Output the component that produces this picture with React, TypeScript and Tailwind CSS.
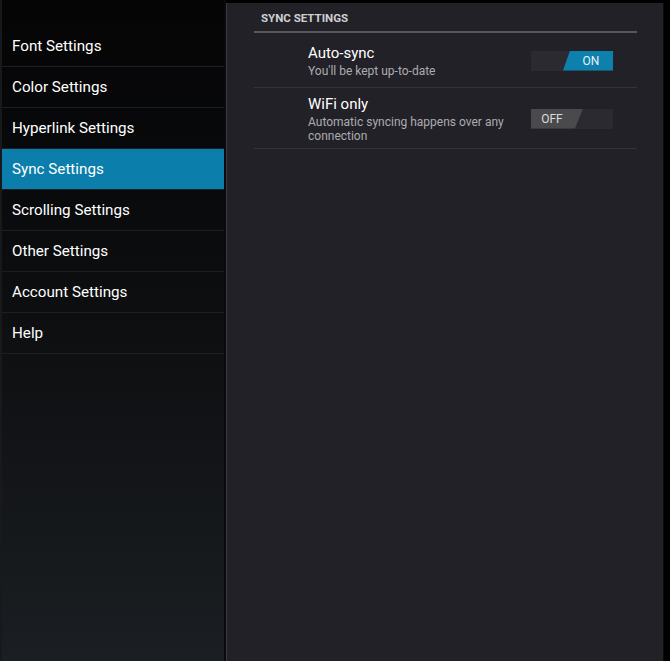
import React from 'react'

const menu = [
  'Font Settings',
  'Color Settings',
  'Hyperlink Settings',
  'Sync Settings',
  'Scrolling Settings',
  'Other Settings',
  'Account Settings',
  'Help',
]

function Toggle({ on }: { on: boolean }) {
  if (on) {
    return (
      <div className="relative w-[82px] h-[20px] bg-[#2b2a30]">
        <div className="absolute inset-0 bg-[#0d80ad] [clip-path:polygon(39px_0,100%_0,100%_100%,32px_100%)]" />
        <span className="absolute inset-y-0 right-0 w-[44px] flex items-center justify-center text-[12px] text-[#e8f4f8]">
          ON
        </span>
      </div>
    )
  }
  return (
    <div className="relative w-[82px] h-[20px] bg-[#2b2a30]">
      <div className="absolute inset-0 bg-[#4a4a4d] [clip-path:polygon(0_0,52px_0,44px_100%,0_100%)]" />
      <span className="absolute inset-y-0 left-0 w-[42px] flex items-center justify-center text-[12px] text-[#dcdcdc]">
        OFF
      </span>
    </div>
  )
}

export default function App() {
  const prefs = [
    { id: 1, title: 'Auto-sync', desc: "You'll be kept up-to-date", on: true },
    { id: 2, title: 'WiFi only', desc: 'Automatic syncing happens over any connection', on: false },
  ]

  return (
    <div className="flex w-[670px] h-[661px] bg-black font-['Roboto',_'Liberation_Sans',_sans-serif] overflow-hidden">
      {/* left menu */}
      <div className="w-[224px] shrink-0 h-full border-l-2 border-[#18191b] bg-gradient-to-b from-[#050506] via-[#0d0f11] to-[#1b1e22] pt-[26px]">
        {menu.map((item) => (
          <div
            key={item}
            className={`h-[41px] flex items-center pl-[10px] pt-[1px] border-b border-[#1c1e21] text-[15.2px] text-white ${
              item === 'Sync Settings' ? 'bg-[#0b7eab]' : ''
            }`}
          >
            {item}
          </div>
        ))}
      </div>

      {/* right panel */}
      <div className="w-[2px] shrink-0 h-full bg-[#0a0a0b]" />
      <div className="flex-1 min-w-0 mt-[3px] mr-[6px] h-full border-l border-[#3a3a40] border-r border-r-[#0c0c0e] bg-[#222127] pl-[27px] pr-[26px]">
        <div className="h-[30px] flex items-end pl-[7px] pb-[4px] border-b-2 border-[#58585c] text-[11.5px] font-bold text-[#cfcfd1]">
          SYNC SETTINGS
        </div>
        {prefs.map((p) => (
          <div key={p.id} className="flex items-center border-b border-[#33333a] min-h-[55px] pt-[6px] pb-[5px]">
            <div className="flex-1 min-w-0 pl-[54px]">
              <div className="text-[15px] text-white leading-[20px]">{p.title}</div>
              <div className="text-[12px] text-[#acacb0] leading-[14px] mt-[1px] w-[205px]">{p.desc}</div>
            </div>
            <div className="shrink-0 mr-[24px]">
              <Toggle on={p.on} />
            </div>
          </div>
        ))}
      </div>
    </div>
  )
}
